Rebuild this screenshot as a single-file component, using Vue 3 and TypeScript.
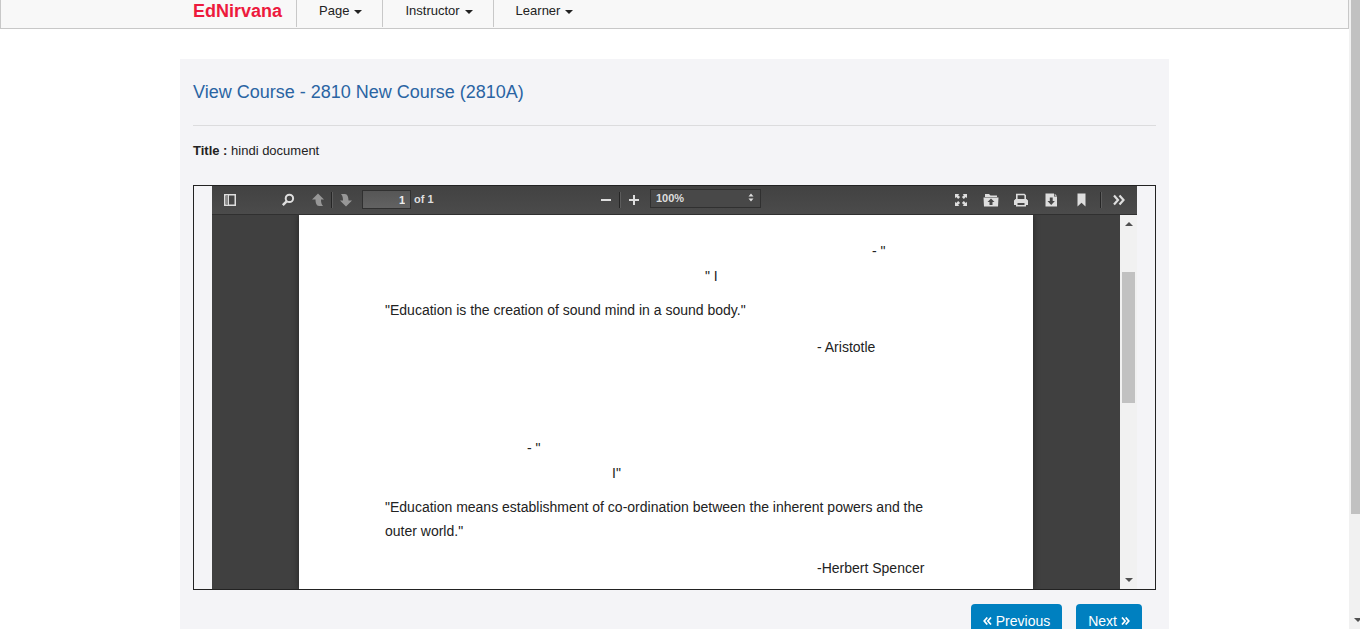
<script setup lang="ts">
import { ref } from 'vue'

interface Line {
  text: string
  place: string
}

const menus: string[] = ['Page', 'Instructor', 'Learner']
const pageNumber = ref('1')
const zoom = ref('100%')

const lines: Line[] = [
  { text: '- "', place: 'hindi-a' },
  { text: '" I', place: 'hindi-b' },
  { text: '"Education is the creation of sound mind in a sound body."', place: 'quote' },
  { text: '- Aristotle', place: 'author' },
  { text: '- "', place: 'hindi-c' },
  { text: 'I"', place: 'hindi-d' },
  {
    text: '"Education means establishment of co-ordination between the inherent powers and the outer world."',
    place: 'quote',
  },
  { text: '-Herbert Spencer', place: 'author' },
]
</script>

<template>
  <div class="window">
    <div class="content">
      <nav class="navbar">
        <div class="navbar-inner">
          <a class="brand" href="#">EdNirvana</a>
          <button v-for="menu in menus" :key="menu" class="menu" type="button">
            {{ menu }}<span class="caret"></span>
          </button>
        </div>
      </nav>

      <main class="panel">
        <h1 class="heading">View Course - 2810 New Course (2810A)</h1>
        <p class="title"><strong>Title :</strong> hindi document</p>

        <section class="viewer">
          <div class="toolbar">
            <div class="group">
              <button class="tool" type="button" aria-label="Toggle sidebar">
                <svg width="14" height="14" viewBox="0 0 14 14">
                  <rect x="1.75" y="1.75" width="10.5" height="10.5" fill="none" stroke="#dedede" stroke-width="1.5" />
                  <path d="M3 3h2v8H3z" fill="#8a8a8a" />
                  <path d="M5.5 2v10" stroke="#dedede" />
                </svg>
              </button>
              <button class="tool search" type="button" aria-label="Find">
                <svg width="14" height="14" viewBox="0 0 14 14">
                  <circle cx="8.4" cy="5.4" r="3.7" fill="none" stroke="#dedede" stroke-width="2" />
                  <path d="M5.6 8.3 1.8 12.2" stroke="#dedede" stroke-width="2.4" />
                </svg>
              </button>
              <button class="tool previous" type="button" aria-label="Previous page">
                <svg width="14" height="14" viewBox="0 0 14 14">
                  <path d="M7 .5 13 6.5H10C10 9 10.3 11 12 13H8C5.5 13 4.500 10 4.500 6.500H1z" fill="#979797" />
                </svg>
              </button>
              <span class="separator"></span>
              <button class="tool" type="button" aria-label="Next page">
                <svg width="14" height="14" viewBox="0 0 14 14">
                  <path d="M7 13.500 1 7.500H4C4 5 3.700 3 2 1H6C8.500 1 9.500 4 9.500 7.500H13z" fill="#979797" />
                </svg>
              </button>
              <input v-model="pageNumber" class="page-number" type="text" aria-label="Page" />
              <span class="page-count">of 1</span>
            </div>

            <div class="group zoom">
              <button class="tool" type="button" aria-label="Zoom out">
                <svg width="14" height="14" viewBox="0 0 14 14">
                  <path d="M2 7h10" stroke="#dedede" stroke-width="2" />
                </svg>
              </button>
              <span class="separator"></span>
              <button class="tool" type="button" aria-label="Zoom in">
                <svg width="14" height="14" viewBox="0 0 14 14">
                  <path d="M2 7h10M7 2v10" stroke="#dedede" stroke-width="2" />
                </svg>
              </button>
              <div class="select-box">
                <select v-model="zoom" aria-label="Zoom">
                  <option>100%</option>
                  <option>125%</option>
                  <option>150%</option>
                </select>
                <svg class="select-mark" width="6" height="9" viewBox="0 0 6 9">
                  <path d="M3 .5 5.500 3.500h-5zM3 8.500.5 5.500h5z" fill="#dedede" />
                </svg>
              </div>
            </div>

            <div class="group actions">
              <button class="tool" type="button" aria-label="Presentation mode">
                <svg width="14" height="14" viewBox="0 0 14 14">
                  <path
                    d="M1 1h4.300L4.100 2.200l2 1.900-1.900 2-2-2L1 5.300zM13 1v4.300l-1.200-1.200-2 2-1.900-2 2-1.900L8.700 1zM1 13V8.700l1.200 1.200 2-2 1.900 2-2 1.900L5.300 13zM13 13H8.700l1.200-1.200-2-1.900 1.900-2 2 2L13 8.700z"
                    fill="#dedede"
                  />
                </svg>
              </button>
              <button class="tool" type="button" aria-label="Open file">
                <svg width="16" height="14" viewBox="0 0 16 14">
                  <path d="M2 1h4l1.500 1.500H14V4H2z" fill="#dedede" />
                  <path
                    fill-rule="evenodd"
                    d="M.5 4.500h15L15 13.500H1zM8 5.500 4.500 9h2v3h3V9h2z"
                    fill="#dedede"
                  />
                </svg>
              </button>
              <button class="tool" type="button" aria-label="Print">
                <svg width="16" height="14" viewBox="0 0 16 14">
                  <path d="M3.800 6.500v-5h7.400l1 1v4" fill="none" stroke="#dedede" stroke-width="1.600" />
                  <path
                    fill-rule="evenodd"
                    d="M2.500 6h11L15 7.500V12h-2v1.500H3V12H1V7.500zM4.500 10v2h7v-2z"
                    fill="#dedede"
                  />
                </svg>
              </button>
              <button class="tool" type="button" aria-label="Download">
                <svg width="14" height="14" viewBox="0 0 14 14">
                  <path
                    fill-rule="evenodd"
                    d="M1.500.5H10v3h3v10H1.500zM5.800 4.500V8H3.500l3.700 4 3.700-4H8.700V4.500z"
                    fill="#dedede"
                  />
                  <path d="M10.700.7 12.800 2.800h-2.100z" fill="#dedede" />
                </svg>
              </button>
              <button class="tool" type="button" aria-label="Bookmark">
                <svg width="14" height="14" viewBox="0 0 14 14">
                  <path d="M3.500.5h8v13l-4-3.700-4 3.700z" fill="#dedede" />
                </svg>
              </button>
              <span class="separator"></span>
              <button class="tool" type="button" aria-label="Tools">
                <svg width="14" height="14" viewBox="0 0 14 14">
                  <path d="M2 2.500 6 7 2 11.500M7.500 2.500l4 4.500-4 4.500" fill="none" stroke="#dedede" stroke-width="2.200" />
                </svg>
              </button>
            </div>
          </div>

          <div class="document">
            <div class="backdrop">
              <article class="sheet">
                <p v-for="(line, index) in lines" :key="index" :class="line.place">{{ line.text }}</p>
              </article>
            </div>
            <div class="scrollbar">
              <span class="arrow up"></span>
              <span class="thumb"></span>
              <span class="arrow down"></span>
            </div>
          </div>
        </section>

        <div class="pager">
          <button class="pager-button" type="button">
            <svg width="9" height="8" viewBox="0 0 9 8">
              <path d="M4.300.5 1.200 4l3.100 3.500M8 .5 4.900 4 8 7.500" fill="none" stroke="#fff" stroke-width="1.700" />
            </svg>
            Previous
          </button>
          <button class="pager-button" type="button">
            Next
            <svg width="9" height="8" viewBox="0 0 9 8">
              <path d="M1 .5 4.100 4 1 7.500M4.700.5 7.800 4 4.700 7.500" fill="none" stroke="#fff" stroke-width="1.700" />
            </svg>
          </button>
        </div>
      </main>
    </div>

    <div class="window-scrollbar">
      <span class="window-thumb"></span>
      <span class="window-arrow"></span>
    </div>
  </div>
</template>

<style>
html,
body {
  overflow: hidden;
  background: #fff;
}
</style>

<style scoped>
.window {
  display: flex;
  height: 100vh;
  overflow: hidden;
  font-family: 'Liberation Sans', Arial, sans-serif;
  font-size: 13px;
  color: #222;
}

.window *,
.window {
  box-sizing: border-box;
}

button,
input,
select {
  margin: 0;
  padding: 0;
  border: 0;
  background: none;
  font: inherit;
  color: inherit;
}

p,
h1 {
  margin: 0;
}

.content {
  flex: 1;
  min-width: 0;
}

.navbar {
  height: 29px;
  border: 1px solid #c8c8c8;
  border-top: 0;
  background: #f8f8f8;
}

.navbar-inner {
  display: flex;
  max-width: 989px;
  height: 27px;
  margin: 0 auto;
  padding-left: 13px;
}

.brand {
  padding-right: 14px;
  font-size: 18px;
  font-weight: bold;
  line-height: 22px;
  color: #ed1a3d;
  text-decoration: none;
}

.menu {
  display: flex;
  align-items: center;
  gap: 5px;
  padding: 0 20px 6px 22px;
  border-left: 1px solid #c8c8c8;
}

.caret {
  margin-top: 3px;
  border: 4px solid transparent;
  border-top-color: #222;
  border-bottom: 0;
}

.panel {
  max-width: 989px;
  margin: 30px auto 0;
  padding: 13px;
  background: #f4f4f7;
}

.heading {
  padding-bottom: 13px;
  border-bottom: 1px solid #dcdcde;
  font-size: 18px;
  font-weight: normal;
  line-height: 40px;
  color: #2a64a3;
}

.title {
  padding: 14px 0 24px;
  line-height: 21px;
}

.viewer {
  padding: 0 18px;
  border: 1px solid #222;
}

.toolbar {
  display: grid;
  grid-template-columns: 1fr auto 1fr;
  height: 29px;
  border-bottom: 1px solid #303030;
  background: linear-gradient(#424242, #4b4b4b);
  font-size: 11px;
  font-weight: bold;
  color: #dedede;
}

.group {
  display: flex;
  align-items: center;
  padding-left: 5px;
}

.tool {
  display: flex;
  align-items: center;
  justify-content: center;
  width: 26px;
  height: 24px;
}

.search {
  margin-left: 32px;
}

.previous {
  margin-left: 4px;
}

.separator {
  width: 2px;
  height: 16px;
  border-left: 1px solid #262626;
  border-right: 1px solid #5c5c5c;
}

.page-number {
  width: 49px;
  height: 19px;
  margin: 0 3px 1px 3px;
  padding-right: 5px;
  border: 1px solid #303030;
  background: linear-gradient(#565656, #626262);
  color: #eee;
  text-align: right;
}

.page-count {
  margin-bottom: 2px;
}

.select-box {
  position: relative;
  width: 111px;
  height: 19px;
  margin: 0 0 4px 3px;
}

.select-box select {
  width: 100%;
  height: 100%;
  padding-left: 5px;
  border: 1px solid #303030;
  appearance: none;
  background: #484848;
}

.select-mark {
  position: absolute;
  top: 4px;
  right: 7px;
}

.actions {
  justify-content: flex-end;
  gap: 4px;
  padding-right: 5px;
}

.actions .separator {
  margin-left: 2px;
}

.document {
  display: flex;
  height: 374px;
}

.backdrop {
  flex: 1;
  padding: 0 87px;
  background: #404040;
}

.sheet {
  height: 100%;
  padding: 24px 86px 0;
  background: #fff;
  box-shadow: 0 0 6px #222;
  clip-path: inset(0 -8px);
  font-size: 14px;
  line-height: 24px;
}

.hindi-a {
  margin: 0 0 1px 487px;
}

.hindi-b {
  margin: 0 0 10px 320px;
}

.quote {
  margin-bottom: 13px;
}

.author {
  margin: 0 0 77px 432px;
  white-space: nowrap;
}

.hindi-c {
  margin: 0 0 1px 142px;
}

.hindi-d {
  margin: 0 0 10px 227px;
}

.author:last-child {
  margin-bottom: 0;
}

.scrollbar {
  display: flex;
  flex-direction: column;
  align-items: center;
  width: 17px;
  padding: 7px 0;
  background: #f1f1f1;
}

.arrow {
  border: 4px solid transparent;
}

.up {
  border-top: 0;
  border-bottom-color: #505050;
}

.down {
  margin-top: auto;
  border-bottom: 0;
  border-top-color: #505050;
}

.thumb {
  width: 13px;
  height: 131px;
  margin-top: 46px;
  background: #c1c1c1;
}

.pager {
  display: flex;
  justify-content: flex-end;
  gap: 14px;
  padding: 14px 14px 20px 0;
}

.pager-button {
  display: flex;
  align-items: center;
  gap: 4px;
  height: 34px;
  padding: 0 12px;
  border-radius: 4px;
  background: #0080c0;
  font-size: 14px;
  color: #fff;
}

.window-scrollbar {
  display: flex;
  flex-direction: column;
  justify-content: space-between;
  width: 11px;
  padding: 0 0 7px 2px;
  overflow: hidden;
  background: #f1f1f1;
}

.window-thumb {
  height: 82.600%;
  background: #c1c1c1;
}

.window-arrow {
  width: 0;
  margin-left: 3px;
  border: 4px solid transparent;
  border-bottom: 0;
  border-top-color: #505050;
}
</style>
